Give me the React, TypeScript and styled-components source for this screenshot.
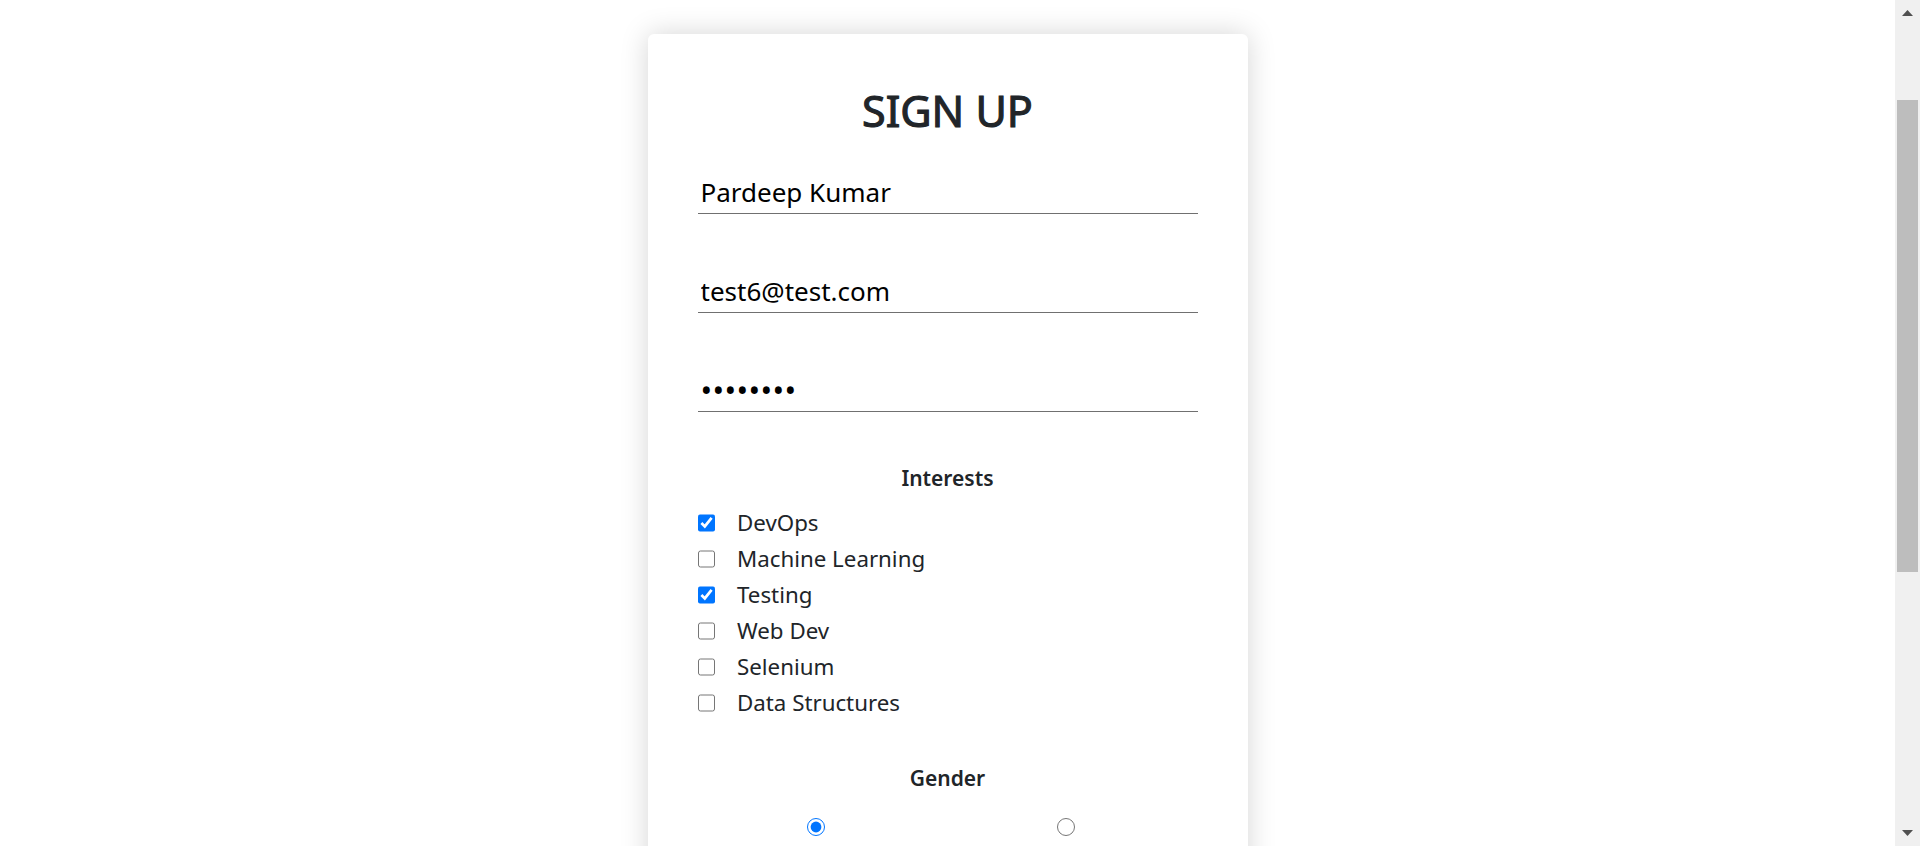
import React, { useLayoutEffect, useRef } from "react";
import styled, { createGlobalStyle } from "styled-components";

const VIEW_HEIGHT = 846;
const CONTENT_HEIGHT = 1421;
const SCROLL_TOP = 132;
const ARROW = 26;
const TRACK = VIEW_HEIGHT - ARROW * 2;
const THUMB = (TRACK * VIEW_HEIGHT) / CONTENT_HEIGHT;
const THUMB_OFFSET = ((TRACK - THUMB) * SCROLL_TOP) / (CONTENT_HEIGHT - VIEW_HEIGHT);

const GlobalStyle = createGlobalStyle`
  html, body {
    margin: 0;
    padding: 0;
    height: 100%;
    overflow: hidden;
    background: #ffffff;
  }
  body {
    font-family: "Noto Sans", "Open Sans", sans-serif;
    color: #212529;
  }
  #root {
    height: 100%;
  }
  *, *::before, *::after {
    box-sizing: border-box;
  }
`;

const Screen = styled.div`
  display: flex;
  height: 100vh;
  background: #ffffff;
`;

const Viewport = styled.div`
  flex: 1;
  min-width: 0;
  overflow-y: auto;
  overflow-x: hidden;
  scrollbar-width: none;
  &::-webkit-scrollbar {
    display: none;
  }
`;

const Rail = styled.div`
  flex: none;
  width: 25px;
  display: flex;
  flex-direction: column;
  background: #f0f0f0;
`;

const RailButton = styled.div`
  flex: none;
  height: ${ARROW}px;
  display: flex;
  align-items: center;
  justify-content: center;
  color: #505050;
`;

const RailTrack = styled.div`
  flex: 1;
  display: flex;
  flex-direction: column;
  padding: 0 2px;
`;

const RailThumb = styled.div`
  flex: none;
  background: #bdbdbd;
`;

const Page = styled.div`
  min-height: ${CONTENT_HEIGHT}px;
  padding: 166px 0 60px;
`;

const Card = styled.form`
  width: 600px;
  margin: 0 auto;
  background: #ffffff;
  border-radius: 6px;
  box-shadow: 0 0 28px rgba(0, 0, 0, 0.17);
  padding: 51px 50px 48px;
  display: flex;
  flex-direction: column;
`;

const Title = styled.h1`
  margin: 0 0 37.6px;
  font-size: 43px;
  font-weight: 400;
  -webkit-text-stroke: 1.1px currentColor;
  line-height: 1.2;
  text-align: center;
  color: #212529;
`;

const Fields = styled.div`
  display: flex;
  flex-direction: column;
  gap: 59px;
  margin-bottom: 50.8px;
`;

const Field = styled.input<{ $secret?: boolean }>`
  display: block;
  width: 100%;
  height: 40px;
  padding: 0 3px 4px;
  border: none;
  border-bottom: 1px solid #707070;
  border-radius: 0;
  font-family: inherit;
  font-size: ${(p) => (p.$secret ? "31px" : "26px")};
  letter-spacing: ${(p) => (p.$secret ? "0.35px" : "normal")};
  color: #000000;
  background: transparent;
  outline: none;
`;

const Group = styled.fieldset<{ $after: number }>`
  border: none;
  margin: 0 0 ${(p) => p.$after}px;
  padding: 0;
  min-width: 0;
  display: flex;
  flex-direction: column;
`;

const GroupTitle = styled.legend<{ $space: number }>`
  display: block;
  float: left;
  width: 100%;
  padding: 0;
  margin: 0 0 ${(p) => p.$space}px;
  font-size: 21px;
  font-weight: 600;
  line-height: 1.5;
  text-align: center;
  color: #212529;
`;

const CheckList = styled.div`
  display: flex;
  flex-direction: column;
`;

const CheckRow = styled.label`
  display: flex;
  align-items: center;
  gap: 22px;
  height: 36px;
  font-size: 22.3px;
  line-height: 36px;
  color: #212529;
  cursor: pointer;
`;

const Box = styled.input`
  width: 17.5px;
  height: 17.5px;
  margin: 0;
  flex: none;
`;

const RadioGrid = styled.div`
  display: grid;
  grid-template-columns: 1fr 1fr;
`;

const RadioOption = styled.div`
  display: flex;
  flex-direction: column;
  align-items: center;
  gap: 34px;
  padding-right: 13px;
`;

const RadioText = styled.label`
  font-size: 22px;
  line-height: 1.2;
  color: #212529;
  cursor: pointer;
`;

const Submit = styled.button`
  align-self: center;
  padding: 10px 36px;
  border: none;
  border-radius: 6px;
  background: #0d6efd;
  color: #ffffff;
  font-family: inherit;
  font-size: 21px;
  cursor: pointer;
`;

const Footnote = styled.p`
  margin: 24px 0 0;
  text-align: center;
  font-size: 19px;
  color: #212529;
`;

const interests = [
  { name: "DevOps", checked: true },
  { name: "Machine Learning", checked: false },
  { name: "Testing", checked: true },
  { name: "Web Dev", checked: false },
  { name: "Selenium", checked: false },
  { name: "Data Structures", checked: false },
];

const genders = [
  { id: "gender-male", label: "Male", checked: true },
  { id: "gender-female", label: "Female", checked: false },
];

const Arrow = ({ down }: { down?: boolean }) => (
  <svg width="11" height="6" viewBox="0 0 11 6" aria-hidden="true">
    <polygon points={down ? "0,0 11,0 5.5,6" : "0,6 11,6 5.5,0"} fill="currentColor" />
  </svg>
);

export default function App() {
  const ref = useRef<HTMLDivElement>(null);

  useLayoutEffect(() => {
    if (ref.current) ref.current.scrollTop = SCROLL_TOP;
  }, []);

  return (
    <>
      <GlobalStyle />
      <Screen>
        <Viewport ref={ref}>
          <Page>
            <Card onSubmit={(e) => e.preventDefault()}>
              <Title>SIGN UP</Title>
              <Fields>
                <Field type="text" defaultValue="Pardeep Kumar" />
                <Field type="email" defaultValue="test6@test.com" />
                <Field type="password" defaultValue="12345678" $secret />
              </Fields>

              <Group $after={41.8}>
                <GroupTitle $space={10.4}>Interests</GroupTitle>
                <CheckList>
                  {interests.map((item) => (
                    <CheckRow key={item.name}>
                      <Box type="checkbox" defaultChecked={item.checked} />
                      {item.name}
                    </CheckRow>
                  ))}
                </CheckList>
              </Group>

              <Group $after={32}>
                <GroupTitle $space={24}>Gender</GroupTitle>
                <RadioGrid>
                  {genders.map((g) => (
                    <RadioOption key={g.id}>
                      <Box id={g.id} type="radio" name="gender" defaultChecked={g.checked} />
                      <RadioText htmlFor={g.id}>{g.label}</RadioText>
                    </RadioOption>
                  ))}
                </RadioGrid>
              </Group>

              <Submit type="submit">Sign Up</Submit>
              <Footnote>Already have an account? Login</Footnote>
            </Card>
          </Page>
        </Viewport>
        <Rail aria-hidden="true">
          <RailButton>
            <Arrow />
          </RailButton>
          <RailTrack>
            <RailThumb style={{ marginTop: THUMB_OFFSET, height: THUMB }} />
          </RailTrack>
          <RailButton>
            <Arrow down />
          </RailButton>
        </Rail>
      </Screen>
    </>
  );
}
